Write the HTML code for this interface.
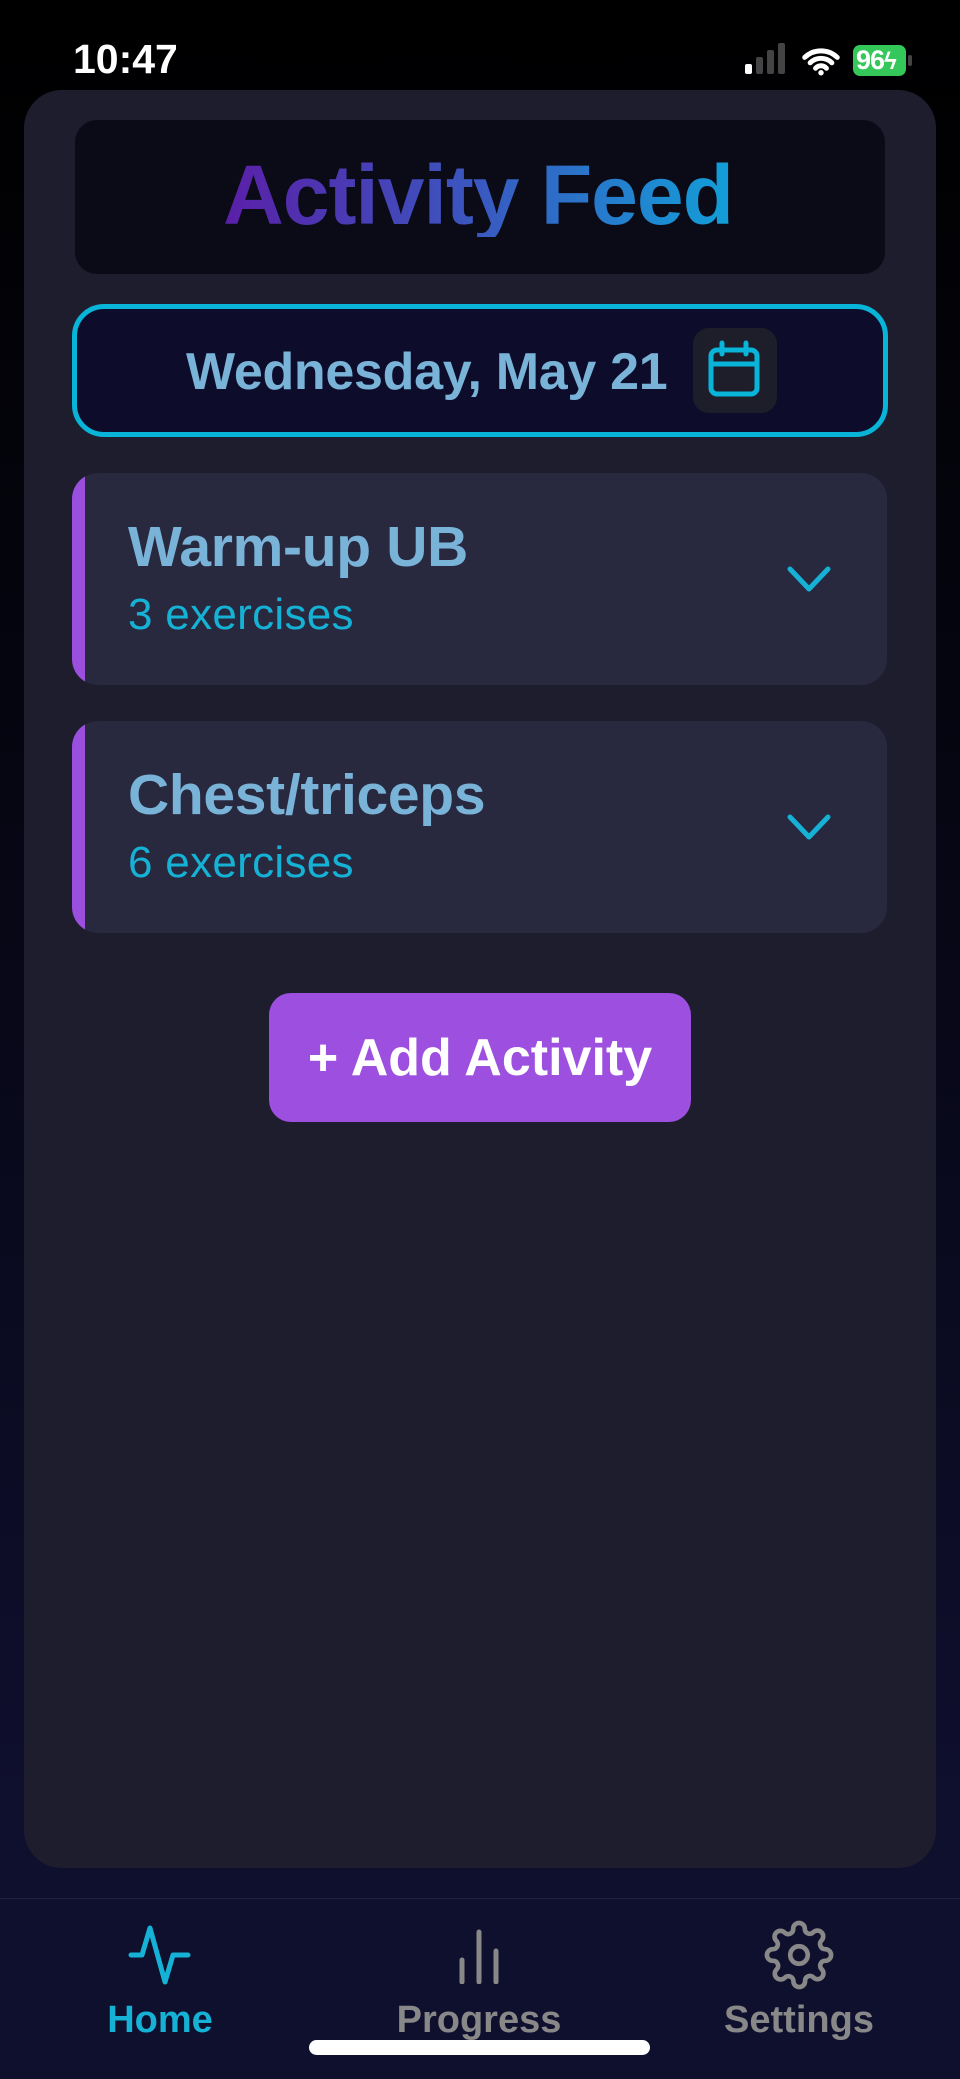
<!DOCTYPE html>
<html><head><meta charset="utf-8"><style>
*{margin:0;padding:0;box-sizing:border-box}
html,body{width:960px;height:2079px;overflow:hidden}
body{background:linear-gradient(180deg,#000 0px,#050510 700px,#0f0f2e 1800px,#0f0f2e 2079px);font-family:"Liberation Sans",sans-serif;position:relative}
.abs{position:absolute}
.time{left:73px;top:36px;font-size:41px;font-weight:bold;color:#fff;letter-spacing:0px}
.main{left:24px;top:90px;width:912px;height:1778px;background:#1e1d2d;border-radius:38px}
.hdr{left:75px;top:120px;width:810px;height:154px;background:#0b0b18;border-radius:22px;display:flex;align-items:center;justify-content:center}
.hdr span{font-size:84px;font-weight:bold;letter-spacing:-1px;background:linear-gradient(90deg,#5a1fa8,#3a58c0 50%,#129fd8);-webkit-background-clip:text;background-clip:text;color:transparent;line-height:1;margin-top:-4px;margin-left:-4px}
.date{left:72px;top:304px;width:816px;height:133px;border:5px solid #08b4d8;border-radius:32px;background:#0d0d2b}
.date .t{left:109px;top:37px;font-size:52px;font-weight:bold;color:#7ab3d8;letter-spacing:-0.3px;line-height:52px}
.cal{left:616px;top:19px;width:84px;height:85px;background:#1e1e2a;border-radius:16px}
.card{left:72px;width:815px;height:212px;background:#28283f;border-radius:26px;overflow:hidden}
.card .bar{left:0;top:0;width:13px;height:100%;background:#9b4fde}
.card .ti{left:56px;top:43px;font-size:57px;font-weight:bold;color:#7ab3d8;letter-spacing:-0.3px;line-height:62px}
.card .su{left:56px;top:118px;font-size:44px;color:#15b2d6;line-height:48px;letter-spacing:0.3px}
.card svg{position:absolute;left:712px;top:90px}
.btn{left:269px;top:993px;width:422px;height:129px;background:#9d4fdf;border-radius:22px;color:#fff;font-size:52px;font-weight:bold;display:flex;align-items:center;justify-content:center}
.div{left:0;top:1898px;width:960px;height:1px;background:#22223a}
.nl{font-size:38px;font-weight:bold;top:1998px;width:300px;text-align:center;line-height:44px}
.ind{left:309px;top:2040px;width:341px;height:15px;background:#fff;border-radius:8px}
</style></head><body>
<div class="abs time">10:47</div>
<div class="abs" style="left:745px;top:64px;width:7px;height:10px;background:#fff;border-radius:2px"></div>
<div class="abs" style="left:756px;top:57px;width:7px;height:17px;background:#444;border-radius:2px"></div>
<div class="abs" style="left:767px;top:50px;width:7px;height:24px;background:#444;border-radius:2px"></div>
<div class="abs" style="left:778px;top:43px;width:7px;height:31px;background:#444;border-radius:2px"></div>
<svg class="abs" style="left:802px;top:46px" width="38" height="30" viewBox="0 0 42 32"><path d="M3 12a26 26 0 0 1 36 0M9 18a17 17 0 0 1 24 0M15 24a8 8 0 0 1 12 0" stroke="#fff" stroke-width="5.5" fill="none" stroke-linecap="round"/><circle cx="21" cy="29" r="3" fill="#fff"/></svg>
<div class="abs" style="left:853px;top:45px;width:53px;height:31px;background:#34c759;border-radius:7px;color:#fff;font-weight:bold;font-size:27px;line-height:31px;padding-left:3px;letter-spacing:-1px">96<span style="font-size:24px">ϟ</span></div>
<div class="abs" style="left:908px;top:55px;width:4px;height:11px;background:#444;border-radius:2px"></div>

<div class="abs main"></div>
<div class="abs hdr"><span>Activity Feed</span></div>
<div class="abs date">
 <div class="abs t">Wednesday, May 21</div>
 <div class="abs cal"><svg width="84" height="85" viewBox="0 0 84 85"><rect x="18" y="22" width="46" height="44" rx="6" stroke="#08b4d8" stroke-width="5" fill="none"/><line x1="18" y1="36" x2="64" y2="36" stroke="#08b4d8" stroke-width="5"/><line x1="29" y1="15" x2="29" y2="26" stroke="#08b4d8" stroke-width="5" stroke-linecap="round"/><line x1="53" y1="15" x2="53" y2="26" stroke="#08b4d8" stroke-width="5" stroke-linecap="round"/></svg></div>
</div>

<div class="abs card" style="top:473px"><div class="abs bar"></div><div class="abs ti">Warm-up UB</div><div class="abs su">3 exercises</div><svg width="50" height="34" viewBox="0 0 50 34"><path d="M6 6 L25 26 L44 6" stroke="#15b2d6" stroke-width="5" fill="none" stroke-linecap="round" stroke-linejoin="round"/></svg></div>
<div class="abs card" style="top:721px"><div class="abs bar"></div><div class="abs ti">Chest/triceps</div><div class="abs su">6 exercises</div><svg width="50" height="34" viewBox="0 0 50 34"><path d="M6 6 L25 26 L44 6" stroke="#15b2d6" stroke-width="5" fill="none" stroke-linecap="round" stroke-linejoin="round"/></svg></div>

<div class="abs btn">+ Add Activity</div>

<div class="abs div"></div>
<svg class="abs" style="left:128px;top:1922px" width="64" height="66" viewBox="0 0 64 66"><path d="M3 33 H14 L22 6 L37 60 L45 33 H60" stroke="#15b2d6" stroke-width="5" fill="none" stroke-linecap="round" stroke-linejoin="round"/></svg>
<svg class="abs" style="left:455px;top:1924px" width="48" height="60" viewBox="0 0 48 60"><path d="M7 58V36M24 58V8M41 58V27" stroke="#888" stroke-width="5" fill="none" stroke-linecap="round"/></svg>
<svg class="abs" style="left:764px;top:1920px" width="70" height="70" viewBox="0 0 24 24"><path d="M12 15a3 3 0 1 0 0-6 3 3 0 0 0 0 6z" stroke="#888" stroke-width="1.6" fill="none"/><path d="M19.4 15a1.65 1.65 0 0 0 .33 1.82l.06.06a2 2 0 1 1-2.830 2.83l-.06-.06a1.65 1.65 0 0 0-1.82-.33 1.65 1.65 0 0 0-1 1.51V21a2 2 0 1 1-4 0v-.09A1.65 1.650 0 0 0 9 19.4a1.65 1.65 0 0 0-1.82.33l-.06.06a2 2 0 1 1-2.83-2.83l.06-.06A1.65 1.65 0 0 0 4.68 15a1.65 1.65 0 0 0-1.51-1H3a2 2 0 1 1 0-4h.09A1.65 1.65 0 0 0 4.6 9a1.65 1.65 0 0 0-.33-1.82l-.06-.06a2 2 0 1 1 2.83-2.83l.06.06A1.65 1.65 0 0 0 9 4.68a1.65 1.65 0 0 0 1-1.510V3a2 2 0 1 1 4 0v.09a1.65 1.65 0 0 0 1 1.51 1.65 1.65 0 0 0 1.82-.33l.06-.06a2 2 0 1 1 2.83 2.83l-.06.06A1.65 1.65 0 0 0 19.4 9a1.65 1.65 0 0 0 1.51 1H21a2 2 0 1 1 0 4h-.09a1.65 1.65 0 0 0-1.51 1z" stroke="#888" stroke-width="1.6" fill="none"/></svg>
<div class="abs nl" style="left:10px;color:#15b2d6">Home</div>
<div class="abs nl" style="left:329px;color:#888">Progress</div>
<div class="abs nl" style="left:649px;color:#888">Settings</div>
<div class="abs ind"></div>
</body></html>
